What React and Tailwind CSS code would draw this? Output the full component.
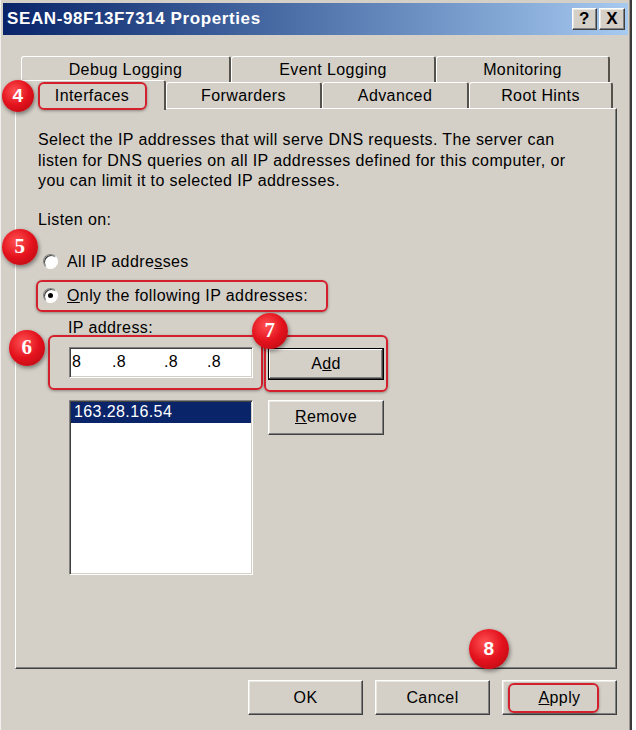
const raised =
  "bg-[#d4d0c8] border border-t-white border-l-white border-r-[#404040] border-b-[#404040] shadow-[inset_-1px_-1px_0_#808080,inset_1px_1px_0_#ebe8e2]";
const sunken =
  "bg-white border border-t-[#808080] border-l-[#808080] border-r-white border-b-white shadow-[inset_1px_1px_0_#404040,inset_-1px_-1px_0_#d4d0c8]";
const outline = "border-2 border-[#d41f2c] rounded-[6px] shadow-[0_1px_3px_rgba(0,0,0,0.35)]";

function Badge({ n, className, serif }) {
  return (
    <div
      className={`absolute z-20 flex items-center justify-center rounded-full bg-[radial-gradient(circle_at_40%_35%,#ff5252_0%,#e3121d_50%,#b00910_100%)] font-bold text-white shadow-[1px_2px_4px_rgba(0,0,0,0.45)] ${
        serif ? "font-['Liberation_Serif',serif] text-[21px]" : "text-[19px]"
      } ${className}`}
    >
      {n}
    </div>
  );
}

function Tab({ w, children, className = "" }) {
  return (
    <div
      className={`${w} flex h-full items-center justify-center rounded-t-[3px] border-t border-l border-r-2 border-t-white border-l-white border-r-[#55524c] ${className}`}
    >
      {children}
    </div>
  );
}

function Radio({ checked }) {
  return (
    <div className="flex h-[15px] w-[15px] items-center justify-center rounded-full border border-t-[#808080] border-l-[#808080] border-r-white border-b-white bg-white shadow-[inset_1px_1px_0_#404040]">
      {checked && <div className="h-[5px] w-[5px] rounded-full bg-black" />}
    </div>
  );
}

export default function App() {
  return (
    <div className="relative h-[730px] w-[636px] overflow-hidden bg-white font-['Liberation_Sans',Arial,sans-serif] text-[16px] tracking-[0.4px] text-black">
      <div className="flex h-[730px] w-[632px] flex-col border-l border-r-2 border-l-[#f2f0ec] border-r-[#3a3a3a] bg-[#d4d0c8] pt-[3px] shadow-[inset_-1px_0_0_#9a968f]">
        {/* title bar */}
        <div className="mx-[2px] flex h-[32px] items-center justify-between bg-linear-to-r from-[#0a246a] to-[#a6caf0] pl-[4px] pr-[3px]">
          <span className="text-[17px] font-bold tracking-[0.6px] text-white">SEAN-98F13F7314 Properties</span>
          <div className="flex gap-[2px]">
            <div className={`${raised} flex h-[22px] w-[25px] items-center justify-center text-[17px] font-bold`}>?</div>
            <div className={`${raised} flex h-[22px] w-[26px] items-center justify-center text-[17px] font-bold`}>X</div>
          </div>
        </div>

        {/* tabs */}
        <div className="ml-[14px] mt-[18px] w-[602px]">
          <div className="ml-[6px] flex h-[29px] w-[589px] pt-[3px]">
            <Tab w="w-[210px]">Debug Logging</Tab>
            <Tab w="w-[205px]">Event Logging</Tab>
            <Tab w="w-[174px]">Monitoring</Tab>
          </div>
          <div className="flex h-[26px] w-[598px]">
            <div className="relative z-10 -mb-[2px] -mt-[2px] flex h-[30px] w-[151px] items-center justify-center rounded-t-[3px] border-t border-l border-r-2 border-t-white border-l-white border-r-[#55524c] bg-[#d4d0c8] pl-[4px]">
              <div className={`${outline} flex h-[28px] w-[109px] items-center justify-center`}>Interfaces</div>
            </div>
            <Tab w="w-[156px]">Forwarders</Tab>
            <Tab w="w-[147px]">Advanced</Tab>
            <Tab w="w-[144px]">Root Hints</Tab>
          </div>

          {/* panel */}
          <div className="h-[561px] w-[602px] border border-t-white border-l-white border-r-[#404040] border-b-[#404040] pl-[20px] pt-[21px] shadow-[inset_-1px_-1px_0_#808080]">
            <p className="ml-[2px] w-[570px] whitespace-nowrap leading-[20.5px]">
              Select the IP addresses that will serve DNS requests. The server can
              <br />
              listen for DNS queries on all IP addresses defined for this computer, or
              <br />
              you can limit it to selected IP addresses.
            </p>
            <div className="ml-[2px] mt-[18px] h-[20px] leading-[20px]">Listen on:</div>

            <div className="mt-[22px] flex h-[20px] items-center gap-[9px] pl-[7px]">
              <Radio />
              <span>
                All IP addre<u>s</u>ses
              </span>
            </div>

            <div className={`${outline} mt-[8px] flex h-[32px] w-[292px] items-center gap-[9px] pl-[5px]`}>
              <Radio checked />
              <span>
                <u>O</u>nly the following IP addresses:
              </span>
            </div>

            <div className="ml-[32px] mt-[6px] h-[20px] leading-[20px]">IP address:</div>

            <div className="-mt-[3px] flex items-start">
              <div className={`${outline} ml-[12px] h-[55px] w-[215px] pl-[19px] pt-[10px]`}>
                <div className={`${sunken} flex h-[31px] w-[184px] items-center pl-[2px]`}>
                  <span className="w-[40px]">8</span>
                  <span className="w-[52px]">.8</span>
                  <span className="w-[43px]">.8</span>
                  <span>.8</span>
                </div>
              </div>
              <div className={`${outline} ml-[1px] h-[57px] w-[124px] pl-[2px] pt-[11px]`}>
                <div className="flex h-[32px] w-[116px] items-center justify-center border border-black bg-[#d4d0c8] shadow-[inset_-1px_-1px_0_#404040,inset_1px_1px_0_#ffffff,inset_-2px_-2px_0_#808080]">
                  <span>
                    A<u>d</u>d
                  </span>
                </div>
              </div>
            </div>

            <div className="mt-[8px] flex items-start">
              <div className={`${sunken} ml-[33px] h-[175px] w-[184px] p-[1px]`}>
                <div className="flex h-[21px] items-center bg-[#0a246a] pl-[3px] text-white">163.28.16.54</div>
              </div>
              <div className={`${raised} ml-[15px] flex h-[35px] w-[116px] items-center justify-center`}>
                <span>
                  <u>R</u>emove
                </span>
              </div>
            </div>
          </div>

          {/* dialog buttons */}
          <div className="mt-[11px] flex w-[602px] justify-end gap-[12px]">
            <div className={`${raised} flex h-[35px] w-[115px] items-center justify-center`}>OK</div>
            <div className={`${raised} flex h-[35px] w-[115px] items-center justify-center`}>Cancel</div>
            <div className={`${raised} relative flex h-[35px] w-[115px] items-center justify-center`}>
              <span>
                <u>A</u>pply
              </span>
              <div className={`${outline} absolute left-[5px] top-[2px] h-[30px] w-[91px]`} />
            </div>
          </div>
        </div>
      </div>

      <Badge n="4" className="left-[2px] top-[80px] h-[32px] w-[32px]" />
      <Badge n="5" serif className="left-[2px] top-[229px] h-[36px] w-[36px]" />
      <Badge n="6" serif className="left-[9px] top-[330px] h-[36px] w-[36px]" />
      <Badge n="7" serif className="left-[252px] top-[313px] h-[36px] w-[36px]" />
      <Badge n="8" className="left-[469px] top-[629px] h-[40px] w-[40px]" />
    </div>
  );
}
